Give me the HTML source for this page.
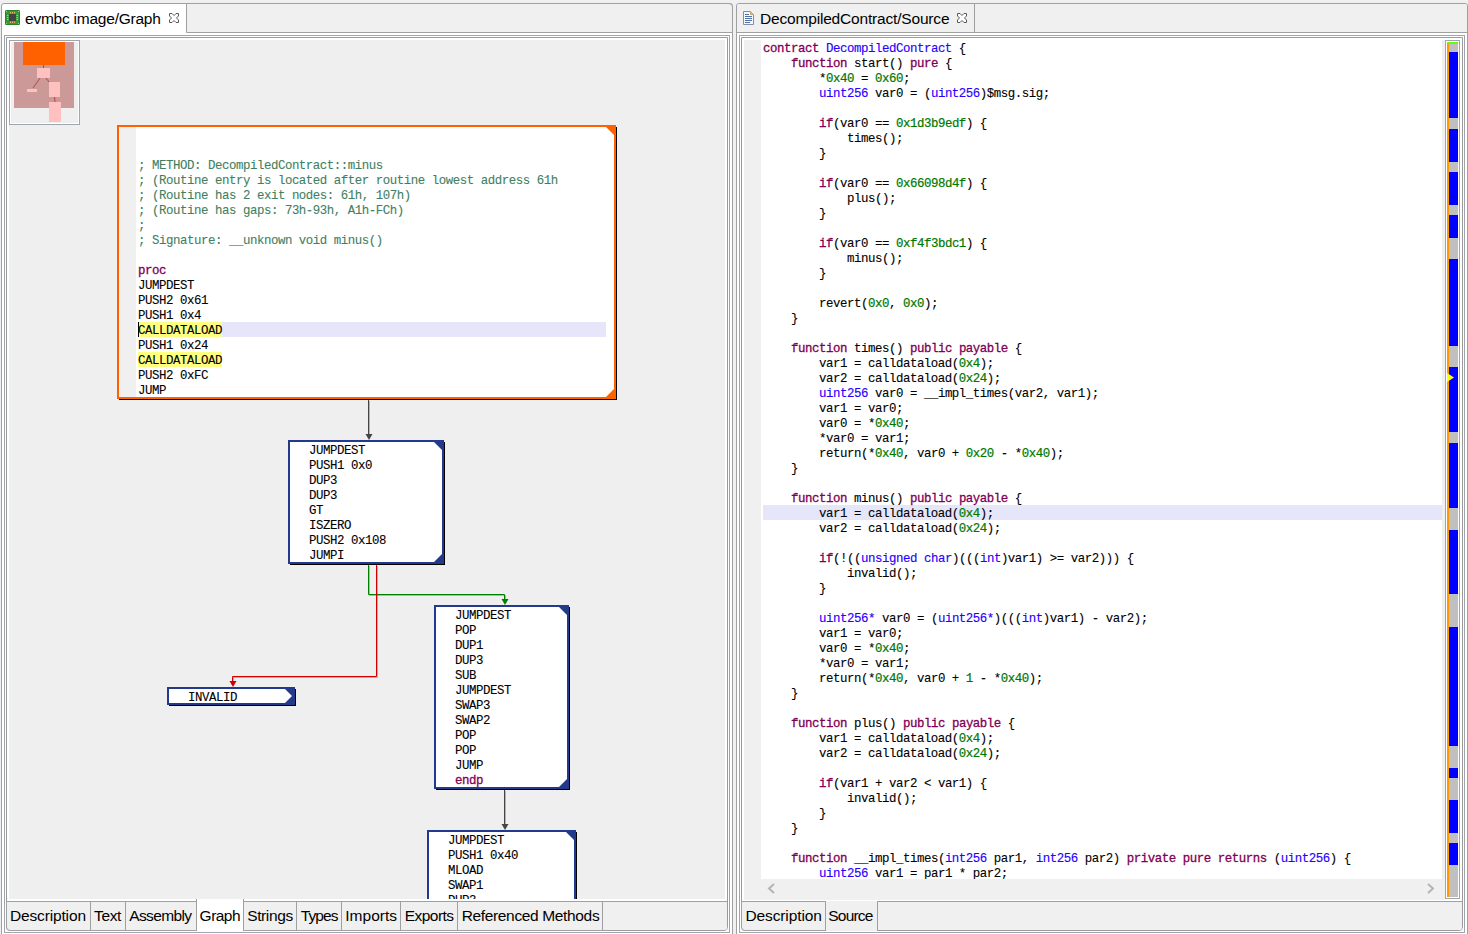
<!DOCTYPE html><html><head><meta charset="utf-8"><style>
*{margin:0;padding:0;box-sizing:border-box}
html,body{width:1468px;height:934px;overflow:hidden;background:#f0f0f0;font-family:"Liberation Sans",sans-serif}
body{position:relative}
.a{position:absolute}
.mono{font-family:"Liberation Mono",monospace;font-size:12.4px;letter-spacing:-0.4412px;line-height:15px;white-space:pre;color:#000;-webkit-text-stroke:0.1px currentColor}
.k{color:#7f0055;-webkit-text-stroke:0.3px currentColor}
.t{color:#2a00ff;-webkit-text-stroke:0.15px currentColor}
.n{color:#007800;-webkit-text-stroke:0.2px currentColor}
.c{color:#3f7f5f}
.tt{position:absolute;font-size:15.5px;line-height:18px;color:#000;white-space:nowrap}
.node{position:absolute;background:#fff;overflow:hidden}
</style></head><body>
<div class="a" style="left:1px;top:3px;width:732px;height:940px;border:1px solid #a0a0a0;border-radius:3px 3px 0 0;background:#fff"></div>
<div class="a" style="left:186px;top:3px;width:547px;height:30px;background:#f0f0f0;border-left:1px solid #a0a0a0;border-bottom:1px solid #a0a0a0;border-top:1px solid #a0a0a0;border-right:1px solid #a0a0a0;border-top-right-radius:4px"></div>
<svg class="a" style="left:5px;top:10px" width="15" height="15" viewBox="0 0 15 15">
<rect x="0" y="0" width="15" height="15" rx="1.5" fill="#3a9a3a"/>
<rect x="0.5" y="0.5" width="14" height="14" rx="1" fill="none" stroke="#2e7d2e" stroke-width="1"/>
<rect x="4" y="4" width="7" height="7" fill="#444"/>
<g fill="#d8c060"><rect x="5" y="2" width="1" height="1.5"/><rect x="7" y="2" width="1" height="1.5"/><rect x="9" y="2" width="1" height="1.5"/>
<rect x="5" y="11.5" width="1" height="1.5"/><rect x="7" y="11.5" width="1" height="1.5"/><rect x="9" y="11.5" width="1" height="1.5"/>
<rect x="2" y="5" width="1.5" height="1"/><rect x="2" y="7" width="1.5" height="1"/><rect x="2" y="9" width="1.5" height="1"/>
<rect x="11.5" y="5" width="1.5" height="1"/><rect x="11.5" y="7" width="1.5" height="1"/><rect x="11.5" y="9" width="1.5" height="1"/>
<rect x="1" y="1" width="1" height="1"/><rect x="13" y="1" width="1" height="1"/><rect x="1" y="13" width="1" height="1"/><rect x="13" y="13" width="1" height="1"/></g>
</svg>
<div class="tt" style="left:25px;top:10px;letter-spacing:-0.23px">evmbc image/Graph</div>
<svg class="a" style="left:169px;top:13px" width="10" height="10" viewBox="0 0 10 10"><path d="M0.5 0.5 H3 L5 2.5 L7 0.5 H9.5 V3 L7.5 5 L9.5 7 V9.5 H7 L5 7.5 L3 9.5 H0.5 V7 L2.5 5 L0.5 3 Z" fill="#fff" stroke="#5a5a5a" stroke-width="1"/></svg>
<div class="a" style="left:4px;top:35px;width:726px;height:898px;border:1px solid #a0a4ac"></div>
<div class="a" style="left:6px;top:37px;width:722px;height:894px;border:1px solid #9a9a9a;border-radius:0 0 4px 4px"></div>
<div class="a" style="left:9px;top:40px;width:716px;height:859px;background:#efefef;overflow:hidden">
<div class="node" style="left:108px;top:85px;width:499px;height:274px;border:2px solid #ff6000;">
<div class="a" style="left:0;top:0;width:17px;height:274px;background:#f0f0f0"></div>
<div class="a" style="left:19px;top:195px;width:468px;height:15px;background:#e6e6fa"></div>
<div class="a" style="left:19px;top:195px;width:84px;height:15px;background:#ffff80"></div>
<div class="a" style="left:19px;top:225px;width:84px;height:15px;background:#ffff80"></div>
<div class="a" style="left:19px;top:195px;width:1px;height:15px;background:#000"></div>
<div class="a mono" style="left:19px;top:2px">

<span class="c">; METHOD: DecompiledContract::minus</span>
<span class="c">; (Routine entry is located after routine lowest address 61h</span>
<span class="c">; (Routine has 2 exit nodes: 61h, 107h)</span>
<span class="c">; (Routine has gaps: 73h-93h, A1h-FCh)</span>
<span class="c">;</span>
<span class="c">; Signature: __unknown void minus()</span>

<span class="k">proc</span>
JUMPDEST
PUSH2 0x61
PUSH1 0x4
CALLDATALOAD
PUSH1 0x24
CALLDATALOAD
PUSH2 0xFC
JUMP</div>
<div class="a" style="right:0;top:0;width:0;height:0;border-top:8px solid #ff6000;border-left:8px solid transparent"></div>
<div class="a" style="right:0;bottom:0;width:0;height:0;border-bottom:8px solid #ff6000;border-left:8px solid transparent"></div>
</div>
<div class="a" style="left:607px;top:87px;width:1px;height:273px;background:#000"></div>
<div class="a" style="left:110px;top:359px;width:498px;height:1px;background:#000"></div>
<div class="node" style="left:279px;top:400px;width:156px;height:124px;border:2px solid #233a8c;">
<div class="a mono" style="left:19px;top:2px">JUMPDEST
PUSH1 0x0
DUP3
DUP3
GT
ISZERO
PUSH2 0x108
JUMPI</div>
<div class="a" style="right:0;top:0;width:0;height:0;border-top:8px solid #233a8c;border-left:8px solid transparent"></div>
<div class="a" style="right:0;bottom:0;width:0;height:0;border-bottom:8px solid #233a8c;border-left:8px solid transparent"></div>
</div>
<div class="a" style="left:435px;top:402px;width:1px;height:123px;background:#000"></div>
<div class="a" style="left:281px;top:524px;width:155px;height:1px;background:#000"></div>
<div class="node" style="left:425px;top:565px;width:135px;height:184px;border:2px solid #233a8c;">
<div class="a mono" style="left:19px;top:2px">JUMPDEST
POP
DUP1
DUP3
SUB
JUMPDEST
SWAP3
SWAP2
POP
POP
JUMP
<span class="k">endp</span></div>
<div class="a" style="right:0;top:0;width:0;height:0;border-top:8px solid #233a8c;border-left:8px solid transparent"></div>
<div class="a" style="right:0;bottom:0;width:0;height:0;border-bottom:8px solid #233a8c;border-left:8px solid transparent"></div>
</div>
<div class="a" style="left:560px;top:567px;width:1px;height:183px;background:#000"></div>
<div class="a" style="left:427px;top:749px;width:134px;height:1px;background:#000"></div>
<div class="node" style="left:158px;top:647px;width:128px;height:18px;border:2px solid #233a8c;">
<div class="a mono" style="left:19px;top:2px">INVALID</div>
<div class="a" style="right:0;top:0;width:0;height:0;border-top:8px solid #233a8c;border-left:8px solid transparent"></div>
<div class="a" style="right:0;bottom:0;width:0;height:0;border-bottom:8px solid #233a8c;border-left:8px solid transparent"></div>
</div>
<div class="a" style="left:286px;top:649px;width:1px;height:17px;background:#000"></div>
<div class="a" style="left:160px;top:665px;width:127px;height:1px;background:#000"></div>
<div class="node" style="left:418px;top:790px;width:149px;height:120px;border:2px solid #233a8c;">
<div class="a mono" style="left:19px;top:2px">JUMPDEST
PUSH1 0x40
MLOAD
SWAP1
DUP3
DUP2</div>
<div class="a" style="right:0;top:0;width:0;height:0;border-top:8px solid #233a8c;border-left:8px solid transparent"></div>
<div class="a" style="right:0;bottom:0;width:0;height:0;border-bottom:8px solid #233a8c;border-left:8px solid transparent"></div>
</div>
<div class="a" style="left:567px;top:792px;width:1px;height:119px;background:#000"></div>
<div class="a" style="left:420px;top:910px;width:148px;height:1px;background:#000"></div>
<svg class="a" style="left:0;top:0" width="716" height="859">
<polyline points="360.5,361 360.5,397" fill="none" stroke="rgba(0,0,0,0.25)" stroke-width="1"/>
<polyline points="359.5,360 359.5,396" fill="none" stroke="#454545" stroke-width="1"/>
<polygon points="356.5,394 363.5,394 360,400" fill="#454545"/>
<polyline points="360.5,526 360.5,555.5 496.5,555.5 496.5,562" fill="none" stroke="rgba(0,0,0,0.25)" stroke-width="1"/>
<polyline points="359.5,525 359.5,554.5 495.5,554.5 495.5,561" fill="none" stroke="#008000" stroke-width="1"/>
<polygon points="492.5,559 499.5,559 496,565" fill="#008000"/>
<polyline points="368.5,526 368.5,637.5 224.5,637.5 224.5,644" fill="none" stroke="rgba(0,0,0,0.25)" stroke-width="1"/>
<polyline points="367.5,525 367.5,636.5 223.5,636.5 223.5,643" fill="none" stroke="#d00000" stroke-width="1"/>
<polygon points="220.5,641 227.5,641 224,647" fill="#d00000"/>
<polyline points="496.5,751 496.5,787" fill="none" stroke="rgba(0,0,0,0.25)" stroke-width="1"/>
<polyline points="495.5,750 495.5,786" fill="none" stroke="#454545" stroke-width="1"/>
<polygon points="492.5,784 499.5,784 496,790" fill="#454545"/>
</svg>
<div class="a" style="left:0px;top:0px;width:71px;height:85px;border:1px solid #a0a4ac;background:#efefef;box-shadow:inset 0 0 0 1px #fff"></div>
<div class="a" style="left:5px;top:2px;width:60px;height:66px;background:#cc9999"></div>
<div class="a" style="left:14px;top:2px;width:42px;height:23px;background:#ff6000"></div>
<div class="a" style="left:28px;top:28px;width:13px;height:10px;background:#ffc0c0"></div>
<div class="a" style="left:18px;top:49px;width:10px;height:3px;background:#ffc0c0"></div>
<div class="a" style="left:40px;top:42px;width:11px;height:15px;background:#ffc0c0"></div>
<div class="a" style="left:40px;top:62px;width:12px;height:20px;background:#ffc0c0"></div>
<svg class="a" style="left:0;top:0" width="80" height="90"><g stroke="#b03030" stroke-width="0.8" fill="none"><polyline points="34.5,25 34.5,28"/><polyline points="31,38 29,41 24,48"/><polyline points="37,38 40,42"/><polyline points="45.5,57 46,62"/></g></svg>
</div>
<div class="a" style="left:7px;top:901px;width:720px;height:29px;border-top:1px solid #a0a0a0;background:#f0f0f0;border-radius:0 0 3px 3px"></div>
<div class="a" style="left:6px;top:901px;width:85px;height:30px;border:1px solid #a0a0a0;background:#f0f0f0;border-bottom-left-radius:4px"></div>
<div class="tt" style="left:9.9px;top:907px;letter-spacing:-0.14px">Description</div>
<div class="a" style="left:90px;top:901px;width:36px;height:30px;border:1px solid #a0a0a0;background:#f0f0f0"></div>
<div class="tt" style="left:94.1px;top:907px;letter-spacing:-0.37px">Text</div>
<div class="a" style="left:125px;top:901px;width:72px;height:30px;border:1px solid #a0a0a0;background:#f0f0f0"></div>
<div class="tt" style="left:129.2px;top:907px;letter-spacing:-0.61px">Assembly</div>
<div class="a" style="left:196px;top:899px;width:48px;height:32px;background:#fff;border-left:1px solid #a0a0a0;border-right:1px solid #a0a0a0"></div>
<div class="tt" style="left:199.6px;top:907px;letter-spacing:-0.52px">Graph</div>
<div class="a" style="left:243px;top:901px;width:54px;height:30px;border:1px solid #a0a0a0;background:#f0f0f0"></div>
<div class="tt" style="left:247.2px;top:907px;letter-spacing:-0.38px">Strings</div>
<div class="a" style="left:296px;top:901px;width:46px;height:30px;border:1px solid #a0a0a0;background:#f0f0f0"></div>
<div class="tt" style="left:300.8px;top:907px;letter-spacing:-0.92px">Types</div>
<div class="a" style="left:341px;top:901px;width:60px;height:30px;border:1px solid #a0a0a0;background:#f0f0f0"></div>
<div class="tt" style="left:345.3px;top:907px;letter-spacing:0.00px">Imports</div>
<div class="a" style="left:400px;top:901px;width:58px;height:30px;border:1px solid #a0a0a0;background:#f0f0f0"></div>
<div class="tt" style="left:404.7px;top:907px;letter-spacing:-0.53px">Exports</div>
<div class="a" style="left:457px;top:901px;width:146px;height:30px;border:1px solid #a0a0a0;background:#f0f0f0"></div>
<div class="tt" style="left:461.7px;top:907px;letter-spacing:-0.35px">Referenced Methods</div>
<div class="a" style="left:736px;top:3px;width:732px;height:940px;border:1px solid #a0a0a0;border-radius:3px 3px 0 0;background:#fff"></div>
<div class="a" style="left:737px;top:4px;width:730px;height:29px;background:#f0f0f0;border-bottom:1px solid #a0a0a0;border-radius:3px 3px 0 0"></div>
<div class="a" style="left:974px;top:4px;width:493px;height:29px;border-left:1px solid #a0a0a0;border-bottom:1px solid #a0a0a0"></div>
<svg class="a" style="left:743px;top:11px" width="11" height="14" viewBox="0 0 11 14">
<path d="M0.5 0.5 H7.5 L10.5 3.5 V13.5 H0.5 Z" fill="#f4f6fa" stroke="#8090a8"/>
<path d="M7.5 0.5 V3.5 H10.5" fill="#d8c890" stroke="#c0a860"/>
<g stroke="#5070a8" stroke-width="1"><line x1="2" y1="3.5" x2="6" y2="3.5"/><line x1="2" y1="5.5" x2="9" y2="5.5"/><line x1="2" y1="7.5" x2="9" y2="7.5"/><line x1="2" y1="9.5" x2="9" y2="9.5"/><line x1="2" y1="11.5" x2="7" y2="11.5"/></g>
</svg>
<div class="tt" style="left:760px;top:10px;letter-spacing:-0.18px">DecompiledContract/Source</div>
<svg class="a" style="left:957px;top:13px" width="10" height="10" viewBox="0 0 10 10"><path d="M0.5 0.5 H3 L5 2.5 L7 0.5 H9.5 V3 L7.5 5 L9.5 7 V9.5 H7 L5 7.5 L3 9.5 H0.5 V7 L2.5 5 L0.5 3 Z" fill="#fff" stroke="#5a5a5a" stroke-width="1"/></svg>
<div class="a" style="left:739px;top:35px;width:726px;height:898px;border:1px solid #a0a4ac"></div>
<div class="a" style="left:741px;top:37px;width:722px;height:894px;border:1px solid #9a9a9a;border-radius:0 0 4px 4px"></div>
<div class="a" style="left:744px;top:40px;width:701px;height:860px;background:#f0f0f0"></div>
<div class="a" style="left:761px;top:40px;width:681px;height:839px;background:#fff;overflow:hidden">
<div class="a" style="left:2px;top:465px;width:679px;height:15px;background:#e6e6fa"></div>
<div class="a mono" style="left:2px;top:2px"><span class="k">contract</span> <span class="t">DecompiledContract</span> {
    <span class="k">function</span> start() <span class="k">pure</span> {
        *<span class="n">0x40</span> = <span class="n">0x60</span>;
        <span class="t">uint256</span> var0 = (<span class="t">uint256</span>)$msg.sig;

        <span class="k">if</span>(var0 == <span class="n">0x1d3b9edf</span>) {
            times();
        }

        <span class="k">if</span>(var0 == <span class="n">0x66098d4f</span>) {
            plus();
        }

        <span class="k">if</span>(var0 == <span class="n">0xf4f3bdc1</span>) {
            minus();
        }

        revert(<span class="n">0x0</span>, <span class="n">0x0</span>);
    }

    <span class="k">function</span> times() <span class="k">public</span> <span class="k">payable</span> {
        var1 = calldataload(<span class="n">0x4</span>);
        var2 = calldataload(<span class="n">0x24</span>);
        <span class="t">uint256</span> var0 = __impl_times(var2, var1);
        var1 = var0;
        var0 = *<span class="n">0x40</span>;
        *var0 = var1;
        return(*<span class="n">0x40</span>, var0 + <span class="n">0x20</span> - *<span class="n">0x40</span>);
    }

    <span class="k">function</span> minus() <span class="k">public</span> <span class="k">payable</span> {
        var1 = calldataload(<span class="n">0x4</span>);
        var2 = calldataload(<span class="n">0x24</span>);

        <span class="k">if</span>(!((<span class="t">unsigned</span> <span class="t">char</span>)(((<span class="t">int</span>)var1) &gt;= var2))) {
            invalid();
        }

        <span class="t">uint256*</span> var0 = (<span class="t">uint256*</span>)(((<span class="t">int</span>)var1) - var2);
        var1 = var0;
        var0 = *<span class="n">0x40</span>;
        *var0 = var1;
        return(*<span class="n">0x40</span>, var0 + <span class="n">1</span> - *<span class="n">0x40</span>);
    }

    <span class="k">function</span> plus() <span class="k">public</span> <span class="k">payable</span> {
        var1 = calldataload(<span class="n">0x4</span>);
        var2 = calldataload(<span class="n">0x24</span>);

        <span class="k">if</span>(var1 + var2 &lt; var1) {
            invalid();
        }
    }

    <span class="k">function</span> __impl_times(<span class="t">int256</span> par1, <span class="t">int256</span> par2) <span class="k">private</span> <span class="k">pure</span> <span class="k">returns</span> (<span class="t">uint256</span>) {
        <span class="t">uint256</span> var1 = par1 * par2;
        return var1;
    }
}</div>
</div>
<svg class="a" style="left:766px;top:883px" width="10" height="11"><polyline points="8,1 3,5.5 8,10" fill="none" stroke="#b4b4b4" stroke-width="2"/></svg>
<svg class="a" style="left:1426px;top:883px" width="10" height="11"><polyline points="2,1 7,5.5 2,10" fill="none" stroke="#b4b4b4" stroke-width="2"/></svg>
<div class="a" style="left:1445px;top:40px;width:15px;height:859px;border:1px solid #a0a4ac;background:#fff"></div>
<div class="a" style="left:1447px;top:42px;width:11px;height:2px;background:#66ff00"></div>
<div class="a" style="left:1447px;top:44px;width:2px;height:853px;background:#ff9900"></div>
<div class="a" style="left:1449px;top:44px;width:9px;height:8px;background:#c0c0c0"></div>
<div class="a" style="left:1449px;top:52px;width:9px;height:66px;background:#0000ff"></div>
<div class="a" style="left:1449px;top:118px;width:9px;height:11px;background:#c0c0c0"></div>
<div class="a" style="left:1449px;top:129px;width:9px;height:33px;background:#0000ff"></div>
<div class="a" style="left:1449px;top:162px;width:9px;height:10px;background:#c0c0c0"></div>
<div class="a" style="left:1449px;top:172px;width:9px;height:33px;background:#0000ff"></div>
<div class="a" style="left:1449px;top:205px;width:9px;height:10px;background:#c0c0c0"></div>
<div class="a" style="left:1449px;top:215px;width:9px;height:23px;background:#0000ff"></div>
<div class="a" style="left:1449px;top:238px;width:9px;height:21px;background:#c0c0c0"></div>
<div class="a" style="left:1449px;top:259px;width:9px;height:87px;background:#0000ff"></div>
<div class="a" style="left:1449px;top:346px;width:9px;height:21px;background:#c0c0c0"></div>
<div class="a" style="left:1449px;top:367px;width:9px;height:65px;background:#0000ff"></div>
<div class="a" style="left:1449px;top:432px;width:9px;height:11px;background:#c0c0c0"></div>
<div class="a" style="left:1449px;top:443px;width:9px;height:65px;background:#0000ff"></div>
<div class="a" style="left:1449px;top:508px;width:9px;height:22px;background:#c0c0c0"></div>
<div class="a" style="left:1449px;top:530px;width:9px;height:64px;background:#0000ff"></div>
<div class="a" style="left:1449px;top:594px;width:9px;height:33px;background:#c0c0c0"></div>
<div class="a" style="left:1449px;top:627px;width:9px;height:119px;background:#0000ff"></div>
<div class="a" style="left:1449px;top:746px;width:9px;height:22px;background:#c0c0c0"></div>
<div class="a" style="left:1449px;top:768px;width:9px;height:10px;background:#0000ff"></div>
<div class="a" style="left:1449px;top:778px;width:9px;height:22px;background:#c0c0c0"></div>
<div class="a" style="left:1449px;top:800px;width:9px;height:33px;background:#0000ff"></div>
<div class="a" style="left:1449px;top:833px;width:9px;height:10px;background:#c0c0c0"></div>
<div class="a" style="left:1449px;top:843px;width:9px;height:22px;background:#0000ff"></div>
<div class="a" style="left:1449px;top:865px;width:9px;height:32px;background:#c0c0c0"></div>
<svg class="a" style="left:1447px;top:373px" width="8" height="10"><polygon points="0,0 7,4.5 0,9" fill="#ffff00"/></svg>
<div class="a" style="left:742px;top:901px;width:720px;height:29px;border-top:1px solid #a0a0a0;background:#f0f0f0;border-radius:0 0 3px 3px"></div>
<div class="a" style="left:741px;top:901px;width:85px;height:30px;border:1px solid #a0a0a0;background:#f0f0f0;border-bottom-left-radius:4px"></div>
<div class="tt" style="left:745.4px;top:907px;letter-spacing:-0.10px">Description</div>
<div class="a" style="left:825px;top:901px;width:53px;height:30px;background:#f0f0f0;border-left:1px solid #a0a0a0;border-right:1px solid #a0a0a0"></div>
<div class="tt" style="left:828.3px;top:907px;letter-spacing:-0.80px">Source</div>
</body></html>
